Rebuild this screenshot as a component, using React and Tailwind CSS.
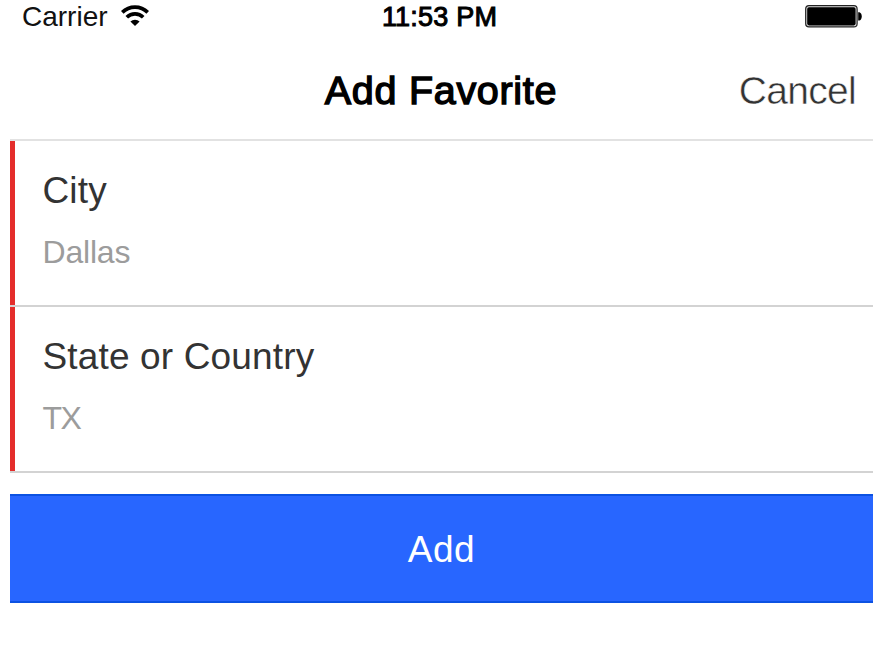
function WifiIcon() {
  return (
    <svg width="28" height="21" viewBox="0 0 28 21" className="mt-[5px] shrink-0" fill="none" stroke="#000" strokeWidth="3.7">
      <path d="M1.3 7.4a18 18 0 0 1 25.4 0" />
      <path d="M5.8 12.3a11.7 11.7 0 0 1 16.4 0" />
      <path d="M14 21l-4.6-4.4a6.4 6.4 0 0 1 9.2 0z" fill="#000" stroke="none" />
    </svg>
  );
}

function BatteryIcon() {
  return (
    <svg width="57" height="23" viewBox="0 0 57 23" className="shrink-0">
      <rect x="0.7" y="0.7" width="51.4" height="21.2" rx="3.2" fill="#ddd" stroke="#222" strokeWidth="1.2" />
      <rect x="2.2" y="2.2" width="48.4" height="18.2" rx="1.8" fill="#000" />
      <path d="M53.2 7.3h1.3c3 1.2 3 7 0 8.2h-1.3z" fill="#000" />
    </svg>
  );
}

function Field({ label, value, valueClass }) {
  return (
    <div className="flex h-[166px] border-b-2 border-[#d3d3d3]">
      <div className="w-[5px] bg-[#e42d2b]" />
      <div className="whitespace-nowrap pl-[27.5px] pt-[26px] leading-[48px]">
        <div className="text-[37px] tracking-[0.15px] text-[#333]">{label}</div>
        <div className={`mt-[13px] text-[32px] text-[#9c9c9c] ${valueClass}`}>{value}</div>
      </div>
    </div>
  );
}

export default function App() {
  return (
    <div className="h-[666px] w-[884px] overflow-hidden bg-white font-['Liberation_Sans',Arial,sans-serif]">
      <div className="h-[139px] whitespace-nowrap leading-[48px]">
        <div className="grid h-[48px] grid-cols-[1fr_auto_1fr] pl-[21px] pr-[22px]">
          <div className="flex gap-[13px]">
            <span className="-mt-[7px] pl-px text-[28px] text-[#111]">Carrier</span>
            <WifiIcon />
          </div>
          <span className="-mt-[7px] -translate-x-[2px] text-[27px] tracking-[0.2px] [-webkit-text-stroke:1px_#000]">11:53 PM</span>
          <div className="flex justify-end pt-[5px]"><BatteryIcon /></div>
        </div>
        <div className="grid grid-cols-[1fr_auto_1fr] pl-[26px] pr-[28px] pt-[18px]">
          <div />
          <span className="text-[39.5px] tracking-[0.7px] [-webkit-text-stroke:1.4px_#000]">Add Favorite</span>
          <span className="mt-px text-right text-[39px] tracking-[-0.7px] text-[#333] [-webkit-text-stroke:0.5px_#fff]">Cancel</span>
        </div>
      </div>
      <div className="ml-[10px] mr-[11px] border-t-2 border-[#e2e2e2]">
        <Field label="City" value="Dallas" valueClass="tracking-[-0.2px]" />
        <Field label="State or Country" value="TX" valueClass="tracking-[-1.6px]" />
        <button className="mt-[21px] block h-[109px] w-full border-y-2 border-[#0c52e2] bg-[#2866ff] pb-[28px] text-[37px] leading-[48px] tracking-[0.5px] text-white">
          <span className="block pt-[30px]">Add</span>
        </button>
      </div>
    </div>
  );
}
